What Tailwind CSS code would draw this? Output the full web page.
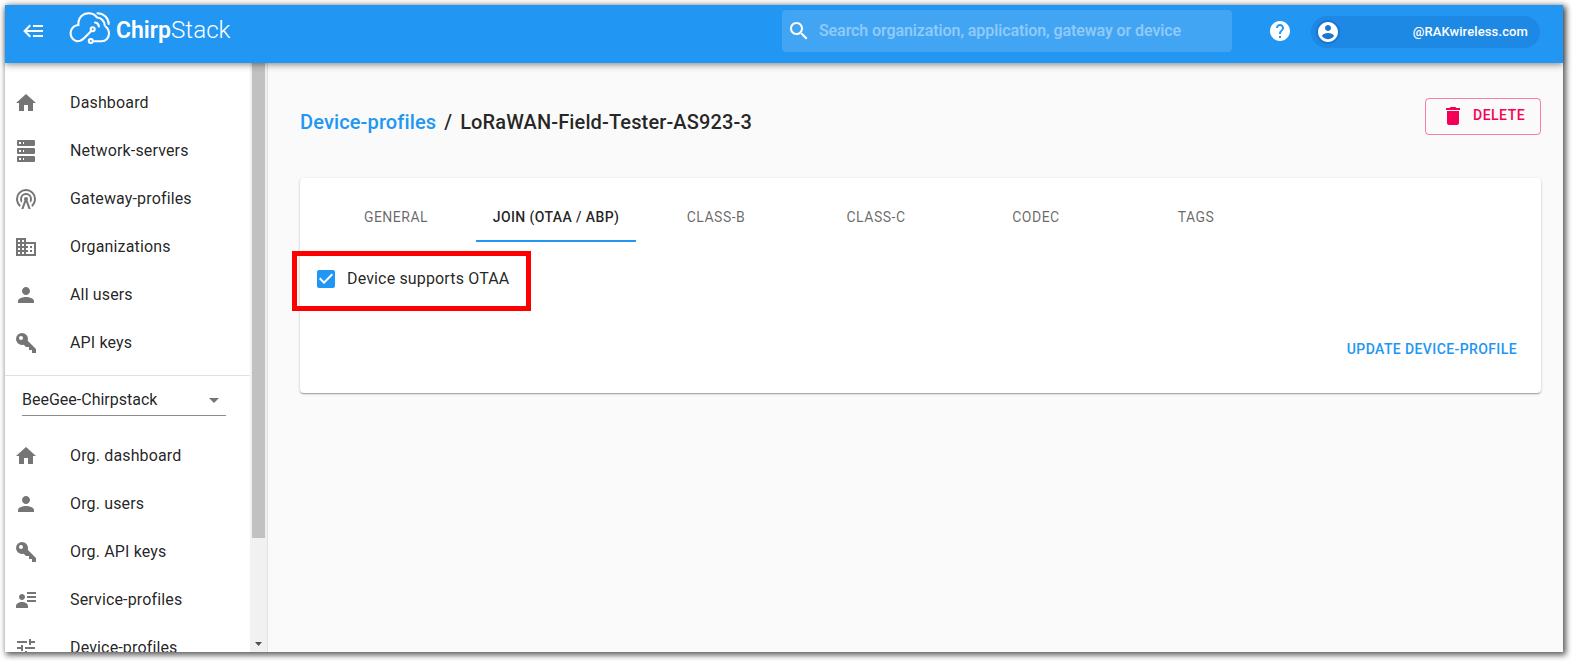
<!DOCTYPE html>
<html lang="en">
<head>
<meta charset="utf-8">
<title>ChirpStack</title>
<script src="https://cdn.jsdelivr.net/npm/@tailwindcss/browser@4"></script>
</head>
<body class="w-[1572px] h-[661px] overflow-hidden bg-white p-[5px] font-['Roboto',sans-serif] text-black/87">
<svg class="hidden">
  <symbol id="home" viewBox="0 0 24 24"><path d="M10 20v-6h4v6h5v-8h3L12 3 2 12h3v8z"/></symbol>
  <symbol id="server" viewBox="0 0 24 24"><path d="M4,1H20A1,1 0 0,1 21,2V6A1,1 0 0,1 20,7H4A1,1 0 0,1 3,6V2A1,1 0 0,1 4,1M4,9H20A1,1 0 0,1 21,10V14A1,1 0 0,1 20,15H4A1,1 0 0,1 3,14V10A1,1 0 0,1 4,9M4,17H20A1,1 0 0,1 21,18V22A1,1 0 0,1 20,23H4A1,1 0 0,1 3,22V18A1,1 0 0,1 4,17M9,5H10V3H9V5M9,13H10V11H9V13M9,21H10V19H9V21M5,3V5H7V3H5M5,11V13H7V11H5M5,19V21H7V19H5Z"/></symbol>
  <symbol id="tower" viewBox="0 0 24 24"><path d="M12,10A2,2 0 0,1 14,12C14,12.5 13.82,12.94 13.53,13.29L16.7,22H14.57L12,14.93L9.43,22H7.3L10.47,13.29C10.18,12.94 10,12.5 10,12A2,2 0 0,1 12,10M12,8A4,4 0 0,0 8,12C8,12.5 8.1,13 8.28,13.46L7.4,15.86C6.53,14.81 6,13.47 6,12A6,6 0 0,1 12,6A6,6 0 0,1 18,12C18,13.47 17.47,14.81 16.6,15.86L15.72,13.46C15.9,13 16,12.5 16,12A4,4 0 0,0 12,8M12,4A8,8 0 0,0 4,12C4,14.36 5,16.5 6.64,17.94L5.92,19.94C3.54,18.11 2,15.23 2,12A10,10 0 0,1 12,2A10,10 0 0,1 22,12C22,15.23 20.46,18.11 18.08,19.94L17.36,17.94C19,16.5 20,14.36 20,12A8,8 0 0,0 12,4Z"/></symbol>
  <symbol id="domain" viewBox="0 0 24 24"><path d="M12 7V3H2v18h20V7H12zM6 19H4v-2h2v2zm0-4H4v-2h2v2zm0-4H4V9h2v2zm0-4H4V5h2v2zm4 12H8v-2h2v2zm0-4H8v-2h2v2zm0-4H8V9h2v2zm0-4H8V5h2v2zm10 12h-8v-2h2v-2h-2v-2h2v-2h-2V9h8v10zm-2-8h-2v2h2v-2zm0 4h-2v2h2v-2z"/></symbol>
  <symbol id="person" viewBox="0 0 24 24"><path d="M12 12c2.21 0 4-1.79 4-4s-1.79-4-4-4-4 1.79-4 4 1.79 4 4 4zm0 2c-2.67 0-8 1.34-8 4v2h16v-2c0-2.66-5.33-4-8-4z"/></symbol>
  <symbol id="key" viewBox="0 0 24 24"><path d="M22,18V22H18V19H15V16H12L9.74,13.74C9.19,13.91 8.61,14 8,14A6,6 0 0,1 2,8A6,6 0 0,1 8,2A6,6 0 0,1 14,8C14,8.61 13.91,9.19 13.74,9.74L22,18M7,5A2,2 0 0,0 5,7A2,2 0 0,0 7,9A2,2 0 0,0 9,7A2,2 0 0,0 7,5Z"/></symbol>
  <symbol id="details" viewBox="0 0 24 24"><path d="M11 9C11 10.66 9.66 12 8 12C6.34 12 5 10.66 5 9C5 7.34 6.34 6 8 6C9.66 6 11 7.34 11 9M14 20H2V18C2 15.79 4.69 14 8 14C11.31 14 14 15.79 14 18M22 12V14H13V12M22 8V10H13V8M22 4V6H13V4Z"/></symbol>
  <symbol id="tune" viewBox="0 0 24 24"><path d="M3 17v2h6v-2H3zM3 5v2h10V5H3zm10 16v-2h8v-2h-8v-2h-2v6h2zM7 9v2H3v2h4v2h2V9H7zm14 4v-2H11v2h10zm-6-4h2V7h4V5h-4V3h-2v6z"/></symbol>
</svg>

<div class="flex h-[647px] w-[1558px] flex-col bg-[#fafafa] shadow-[2px_2px_6px_1px_rgba(0,0,0,0.65)]">
  <header class="relative z-10 flex h-[58px] shrink-0 items-start bg-[#2196f3] text-white shadow-[0_2px_4px_-1px_rgba(0,0,0,0.2),0_4px_5px_0_rgba(0,0,0,0.14),0_1px_10px_0_rgba(0,0,0,0.12)]">
    <svg class="mt-[14px] ml-[17px] size-6 fill-current" viewBox="0 0 24 24"><path d="M5,13L9,17L7.6,18.42L1.18,12L7.6,5.58L9,7L5,11H21V13H5M21,6V8H11V6H21M21,16V18H11V16H21Z"/></svg>
    <svg class="mt-1 ml-[19px] h-[42px] w-[170px]" viewBox="65 9 170 42">
      <g fill="none" stroke="currentColor" stroke-width="2.1" stroke-linecap="round">
        <path d="M91.200 31L84 38.200C81.800 40.400 79.800 41.200 77 41.200A8.200 8.200 0 0 1 78.400 25C78 17.500 83 13.200 88.500 13.200C92 13.200 94.700 14.500 96.600 17"/>
        <circle cx="92.700" cy="29.300" r="2"/>
        <circle cx="90.800" cy="41" r="2"/>
        <path d="M93.500 41.200H101.500C106 41.200 109 37.700 109 33.500C109 30.500 107.800 28.200 105.500 26.500"/>
        <path d="M97.500 13.200C103.500 13.200 108.500 18 108.700 24"/>
        <path d="M97 17.500C101 17.800 104.300 20.900 104.600 25"/>
        <path d="M95 22.500C97.300 22.800 98.700 24.300 98.900 26.500"/>
      </g>
      <text x="116" y="38" fill="currentColor" font-size="24" font-weight="600" textLength="55" lengthAdjust="spacingAndGlyphs">Chirp</text>
      <text x="171" y="38" fill="currentColor" font-size="24" font-weight="300" textLength="59.500" lengthAdjust="spacingAndGlyphs">Stack</text>
    </svg>
    <div class="mt-[5px] ml-[547px] flex h-[42px] w-[450px] items-center rounded bg-white/15 pl-[5px]">
      <svg class="size-6 fill-current" viewBox="0 0 24 24"><path d="M15.500 14h-.79l-.28-.27C15.410 12.590 16 11.110 16 9.500 16 5.910 13.090 3 9.500 3S3 5.910 3 9.500 5.910 16 9.500 16c1.610 0 3.090-.59 4.230-1.570l.27.28v.79l5 4.990L20.490 19l-4.990-5zm-6 0C7.010 14 5 11.990 5 9.500S7.010 5 9.500 5 14 7.010 14 9.500 11.990 14 9.500 14z"/></svg>
      <span class="ml-2 text-base font-medium tracking-[-0.08px] text-white/42">Search organization, application, gateway or device</span>
    </div>
    <svg class="mt-[14px] ml-9 size-6 fill-current" viewBox="0 0 24 24"><path d="M12 2C6.480 2 2 6.480 2 12s4.480 10 10 10 10-4.480 10-10S17.520 2 12 2zm1 17h-2v-2h2v2zm2.070-7.750l-.9.920C13.450 12.900 13 13.500 13 15h-2v-.5c0-1.100.45-2.100 1.170-2.830l1.240-1.260c.37-.36.59-.86.59-1.410 0-1.100-.9-2-2-2s-2 .9-2 2H8c0-2.210 1.790-4 4-4s4 1.790 4 4c0 .88-.36 1.680-.93 2.250z"/></svg>
    <div class="mt-[11px] ml-[19px] flex h-8 w-[229px] items-center justify-between rounded-full bg-[#1e88e5] pr-3 pl-[5px]">
      <span class="size-6 rounded-full bg-[#1976d2]"><svg class="size-6 fill-current" viewBox="0 0 24 24"><path d="M12 2C6.480 2 2 6.480 2 12s4.480 10 10 10 10-4.480 10-10S17.520 2 12 2zm0 3c1.660 0 3 1.340 3 3s-1.340 3-3 3-3-1.340-3-3 1.340-3 3-3zm0 14.200c-2.500 0-4.710-1.280-6-3.220.03-1.990 4-3.080 6-3.080 1.990 0 5.970 1.090 6 3.080-1.290 1.940-3.500 3.220-6 3.220z"/></svg></span>
      <span class="text-[13px] font-medium tracking-[0.12px]">@RAKwireless.com</span>
    </div>
  </header>

  <div class="flex min-h-0 flex-1">
    <aside class="flex w-[263px] shrink-0 overflow-hidden border-r border-[#e0e0e0] bg-white">
      <nav class="w-[245px] shrink-0 text-base tracking-[0.15px]">
        <ul class="h-[313px] border-b border-[#e0e0e0] pt-4 *:flex *:h-12 *:items-center *:gap-8 *:pl-[9px] [&_svg]:size-6 [&_svg]:fill-[#757575] [&_span]:-mt-px">
          <li><svg><use href="#home"/></svg><span>Dashboard</span></li>
          <li><svg><use href="#server"/></svg><span>Network-servers</span></li>
          <li><svg><use href="#tower"/></svg><span>Gateway-profiles</span></li>
          <li><svg><use href="#domain"/></svg><span>Organizations</span></li>
          <li><svg><use href="#person"/></svg><span>All users</span></li>
          <li><svg><use href="#key"/></svg><span>API keys</span></li>
        </ul>
        <div class="mt-2 mr-[24px] ml-[17px] flex h-8 items-center justify-between border-b border-[#8c8c8c] tracking-normal">
          <span class="mt-px">BeeGee-Chirpstack</span>
          <svg class="size-6 fill-[#757575]" viewBox="0 0 24 24"><path d="M7 10l5 5 5-5z"/></svg>
        </div>
        <ul class="pt-4 *:flex *:h-12 *:items-center *:gap-8 *:pl-[9px] [&_svg]:size-6 [&_svg]:fill-[#757575] [&_span]:-mt-px">
          <li><svg><use href="#home"/></svg><span>Org. dashboard</span></li>
          <li><svg><use href="#person"/></svg><span>Org. users</span></li>
          <li><svg><use href="#key"/></svg><span>Org. API keys</span></li>
          <li><svg><use href="#details"/></svg><span>Service-profiles</span></li>
          <li><svg><use href="#tune"/></svg><span>Device-profiles</span></li>
        </ul>
      </nav>
      <div class="flex h-full w-[17px] flex-col justify-between bg-[#f1f1f1] pl-[2px]">
        <div class="h-[475px] w-[13px] bg-[#c1c1c1]"></div>
        <svg class="mb-[6px] ml-[3px] h-1 w-[7px] fill-[#505050]" viewBox="0 0 7 4"><path d="M0 0H7L3.500 4z"/></svg>
      </div>
    </aside>

    <main class="flex-1 pt-[35px] pr-[22px] pl-8">
      <div class="flex h-20 items-start justify-between">
        <h1 class="mt-[10px] flex text-xl leading-7 font-medium tracking-[0.13px]"><span class="text-[#2196f3]">Device-profiles</span><span class="mx-[8px]">/</span><span>LoRaWAN-Field-Tester-AS923-3</span></h1>
        <button class="flex h-[37px] w-[116px] rounded border border-[#f50057]/50 pl-[15px] text-sm font-medium tracking-[0.5px] text-[#f50057]"><svg class="mt-[5px] size-6 fill-current" viewBox="0 0 24 24"><path d="M6 19c0 1.100.9 2 2 2h8c1.100 0 2-.9 2-2V7H6v12zM19 4h-3.500l-1-1h-5l-1 1H5v2h14V4z"/></svg><span class="mt-[6px] ml-2">DELETE</span></button>
      </div>
      <section class="relative h-[215px] rounded bg-white px-4 pt-[15px] shadow-[0_1px_3px_0_rgba(0,0,0,0.2),0_1px_1px_0_rgba(0,0,0,0.14),0_2px_1px_-1px_rgba(0,0,0,0.12)]">
        <div class="flex h-[49px] text-center text-sm leading-[48px] tracking-[0.5px] text-black/60 *:h-[49px] *:w-40">
          <div>GENERAL</div>
          <div class="border-b-2 border-[#2196f3] font-medium tracking-[0.4px] text-black/87">JOIN (OTAA / ABP)</div>
          <div>CLASS-B</div>
          <div>CLASS-C</div>
          <div>CODEC</div>
          <div>TAGS</div>
        </div>
        <div class="absolute top-[73px] -left-2 flex h-[60px] w-[239px] items-start border-5 border-[#ff0000] pt-[11px] pl-[17px]">
          <svg class="size-6" viewBox="0 0 24 24"><path fill="#2196f3" d="M19 3H5c-1.110 0-2 .9-2 2v14c0 1.100.89 2 2 2h14c1.110 0 2-.9 2-2V5c0-1.100-.89-2-2-2zm-9 14l-5-5 1.410-1.410L10 14.170l7.590-7.590L19 8l-9 9z"/></svg>
          <span class="ml-[9px] text-base tracking-[0.15px]">Device supports OTAA</span>
        </div>
        <div class="flex justify-end pt-[97px] pr-2 text-sm leading-[21px] font-medium tracking-[0.4px] text-[#2196f3]">UPDATE DEVICE-PROFILE</div>
      </section>
    </main>
  </div>
</div>
</body>
</html>
